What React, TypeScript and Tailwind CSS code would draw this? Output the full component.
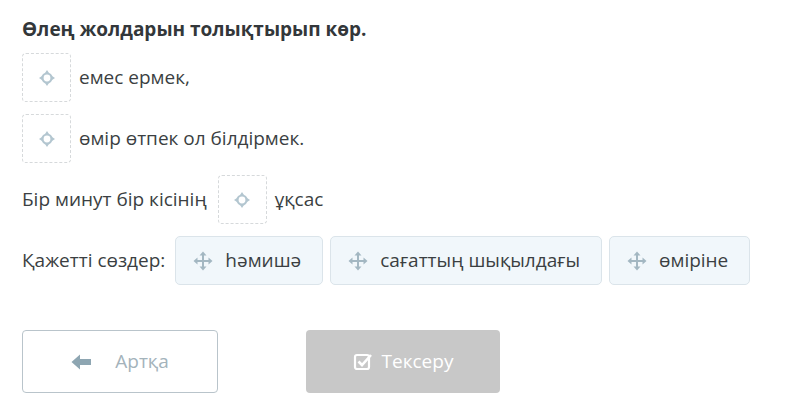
import React from 'react';

const font = { fontFamily: '"Open Sans", "Noto Sans", sans-serif' };

const Target: React.FC = () => (
  <svg width="18" height="18" viewBox="0 0 18 18" fill="none">
    <circle cx="9" cy="9" r="4.5" stroke="#b3c6d0" strokeWidth="2.2" />
    <path d="M9 1 L7 4 H11 Z M9 17 L7 14 H11 Z M1 9 L4 7 V11 Z M17 9 L14 7 V11 Z" fill="#b3c6d0" />
  </svg>
);

const Move: React.FC = () => (
  <svg width="20" height="20" viewBox="0 0 20 20" fill="#a3b7c2">
    <rect x="9" y="4" width="2" height="12" />
    <rect x="4" y="9" width="12" height="2" />
    <path d="M10 0.5 L6.5 4.5 H13.5 Z M10 19.5 L6.5 15.5 H13.5 Z M0.5 10 L4.5 6.5 V13.5 Z M19.5 10 L15.5 6.5 V13.5 Z" />
  </svg>
);

const Drop: React.FC = () => (
  <div className="w-[49px] h-[49px] shrink-0 flex items-center justify-center rounded border border-dashed border-[#d6d9db] bg-white">
    <Target />
  </div>
);

const Chip: React.FC<{ label: string }> = ({ label }) => (
  <div className="h-[49px] flex items-center gap-[12px] pl-[17px] pr-[21px] rounded-[5px] border border-[#dbe4ea] bg-[#f1f7fb] text-[19px] text-[#3b3f42]">
    <Move />
    <span>{label}</span>
  </div>
);

export default function App() {
  return (
    <div className="w-[795px] h-[416px] bg-white pl-[22px] pt-[15px]" style={font}>
      <h1 className="text-[19px] font-bold text-[#33373a] leading-[28px]">Өлең жолдарын толықтырып көр.</h1>
      <div className="mt-[10px] flex flex-col gap-[12px]">
        <div className="flex items-center gap-[8px] text-[19px] text-[#3b3f42]">
          <Drop />
          <span>емес ермек,</span>
        </div>
        <div className="flex items-center gap-[8px] text-[19px] text-[#3b3f42]">
          <Drop />
          <span>өмір өтпек ол білдірмек.</span>
        </div>
        <div className="flex items-center text-[19px] text-[#3b3f42]">
          <span>Бір минут бір кісінің</span>
          <div className="ml-[11px] mr-[8px]"><Drop /></div>
          <span>ұқсас</span>
        </div>
        <div className="flex items-center gap-[7px] text-[19px] text-[#3b3f42]">
          <span className="mr-[3px]">Қажетті сөздер:</span>
          <Chip label="һәмишә" />
          <Chip label="сағаттың шықылдағы" />
          <Chip label="өміріне" />
        </div>
      </div>
      <div className="mt-[45px] flex gap-[88px]">
        <button className="w-[196px] h-[63px] flex items-center justify-center gap-[22px] rounded-[4px] border border-[#b9c4cb] bg-white text-[19px] text-[#a4b3bb]">
          <svg width="22" height="18" viewBox="0 0 22 18" fill="#8ea6b2">
            <path d="M0.5 9 L9 1.5 V6 H20 V12 H9 V16.5 Z" />
          </svg>
          <span>Артқа</span>
        </button>
        <button className="w-[194px] h-[63px] flex items-center justify-center gap-[9px] rounded-[4px] bg-[#c8c8c8] text-[19px] text-white">
          <svg width="20" height="20" viewBox="0 0 20 20" fill="none" stroke="white">
            <rect x="2" y="3" width="14" height="14" rx="2" strokeWidth="2.2" />
            <path d="M5.5 9.5 L9 13 L18 3" strokeWidth="2.6" />
          </svg>
          <span>Тексеру</span>
        </button>
      </div>
    </div>
  );
}
